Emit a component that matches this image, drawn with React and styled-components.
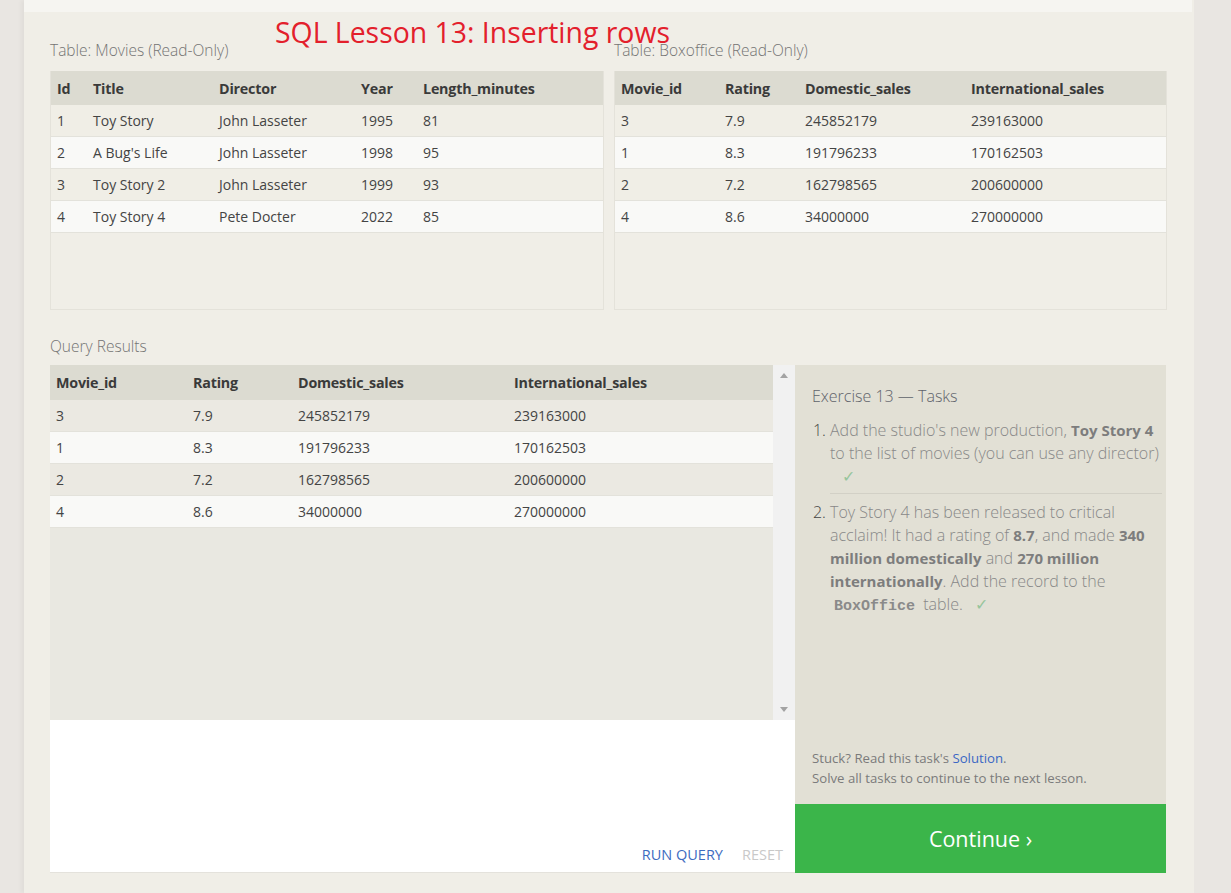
import React from 'react';
import styled, { createGlobalStyle } from 'styled-components';

const GlobalStyle = createGlobalStyle`
  html, body {
    margin: 0;
    padding: 0;
    background: #e9e6e2;
    font-family: "Open Sans", "Noto Sans", sans-serif;
  }
`;

const Page = styled.div`
  position: relative;
  margin-left: 24px;
  width: 1170px;
  min-height: 893px;
  background: #f0eee7;
  box-shadow: -3px 0 4px rgba(0, 0, 0, 0.04);
`;

const TopStrip = styled.div`
  height: 12px;
  margin-right: 2px;
  background: #f6f5f1;
`;

const Content = styled.div`
  padding: 26px 27px 20px 26px;
`;

const Overlay = styled.div`
  position: absolute;
  left: 251px;
  top: 13px;
  font-family: "Open Sans", "Noto Sans", sans-serif;
  font-size: 28.4px;
  color: #e3202c;
  white-space: nowrap;
`;

const TablesRow = styled.div`
  display: grid;
  grid-template-columns: 554px 553px;
  gap: 10px;
`;

const Label = styled.div`
  font-size: 15.5px;
  font-weight: 300;
  color: #747474;
  height: 33px;
  line-height: 24px;
`;

const TableBox = styled.div`
  height: 239px;
  border: 1px solid #e4e2da;
  border-top: none;
  box-sizing: border-box;
  background: ${(p) => p.bg || '#f0eee7'};
`;

const Table = styled.table`
  width: 100%;
  border-collapse: collapse;
  table-layout: fixed;
  font-size: 14px;
`;

const Th = styled.th`
  width: ${(p) => (p.w ? `${p.w}px` : 'auto')};
  height: ${(p) => p.h || 34}px;
  padding: 0 0 0 6px;
  text-align: left;
  font-weight: 700;
  font-size: 14.3px;
  letter-spacing: -0.2px;
  color: #3a3a3a;
  background: #dcdbd1;
  box-sizing: border-box;
`;

const Tr = styled.tr`
  background: ${(p) => (p.even ? '#f9f9f7' : p.odd)};
  border-bottom: 1px solid #e3e2db;
`;

const Td = styled.td`
  height: 31px;
  padding: 0 0 0 6px;
  color: #444;
  font-weight: 400;
`;

const ResultsLabel = styled(Label)`
  margin-top: 26px;
  height: 29px;
  line-height: 20px;
`;

const Workspace = styled.div`
  display: grid;
  grid-template-columns: 745px 371px;
`;

const LeftCol = styled.div`
  display: flex;
  flex-direction: column;
`;

const ResultsArea = styled.div`
  display: flex;
  height: 355px;
  background: #e9e8e1;
`;

const ResultsTableWrap = styled.div`
  flex: 1;
`;

const Scrollbar = styled.div`
  width: 22px;
  background: #f1f1f1;
  display: flex;
  flex-direction: column;
  justify-content: space-between;
  align-items: center;
  padding: 8px 0 8px;
  box-sizing: border-box;
`;

const Arrow = styled.div`
  width: 0;
  height: 0;
  border-left: 4px solid transparent;
  border-right: 4px solid transparent;
  ${(p) => (p.down ? 'border-top: 5px solid #a3a3a3;' : 'border-bottom: 5px solid #a3a3a3;')}
`;

const Editor = styled.div`
  height: 153px;
  background: #fff;
  border-bottom: 1px solid #e4e2dc;
  box-sizing: border-box;
  display: flex;
  align-items: flex-end;
  justify-content: flex-end;
  gap: 19px;
  padding: 0 12px 8px 0;
`;

const EditorButton = styled.span`
  font-size: 14.5px;
  color: ${(p) => (p.muted ? '#c9c9c9' : '#3d6bbf')};
`;

const RightCol = styled.div`
  display: flex;
  flex-direction: column;
`;

const TaskPanel = styled.div`
  height: 439px;
  background: #e2e0d5;
  padding: 20px 4px 0 17px;
  box-sizing: border-box;
  display: flex;
  flex-direction: column;
`;

const TaskTitle = styled.div`
  font-size: 16px;
  font-weight: 300;
  color: #5f636b;
  margin-bottom: 12px;
`;

const TaskList = styled.ol`
  margin: 0;
  padding: 0 0 0 18px;
  font-size: 16px;
  line-height: 23px;
  font-weight: 300;
  color: #888;

  li::marker {
    color: #444;
  }
`;

const Task = styled.li`
  padding: 0 0 ${(p) => (p.last ? 0 : 5)}px 0;
  margin-bottom: ${(p) => (p.last ? 0 : 7)}px;
  border-bottom: ${(p) => (p.last ? 'none' : '1px solid #d2d0c6')};
`;

const B = styled.b`
  font-weight: 700;
  font-size: 15px;
  color: #7d7d7d;
`;

const Code = styled.code`
  font-family: "Liberation Mono", "DejaVu Sans Mono", monospace;
  font-weight: 700;
  font-size: 15px;
  color: #8a8a8a;
  padding: 0 4px;
`;

const Check = styled.span`
  color: #97c59c;
  margin-left: ${(p) => p.ml || 8}px;
`;

const Stuck = styled.div`
  margin-top: auto;
  padding-bottom: 16px;
  font-size: 13.2px;
  line-height: 20px;
  color: #7b7b7b;
`;

const Link = styled.a`
  color: #3a67c4;
  text-decoration: none;
`;

const Continue = styled.button`
  height: 69px;
  border: none;
  background: #3bb54a;
  color: #fff;
  font-family: "Open Sans", "Noto Sans", sans-serif;
  font-size: 21.5px;
  padding: 0;
  cursor: pointer;
`;

const movies = [
  ['1', 'Toy Story', 'John Lasseter', '1995', '81'],
  ['2', "A Bug's Life", 'John Lasseter', '1998', '95'],
  ['3', 'Toy Story 2', 'John Lasseter', '1999', '93'],
  ['4', 'Toy Story 4', 'Pete Docter', '2022', '85'],
];

const boxoffice = [
  ['3', '7.9', '245852179', '239163000'],
  ['1', '8.3', '191796233', '170162503'],
  ['2', '7.2', '162798565', '200600000'],
  ['4', '8.6', '34000000', '270000000'],
];

const DataTable = ({ cols, widths, rows, odd, headH }) => (
  <Table>
    <thead>
      <tr>
        {cols.map((c, i) => (
          <Th key={c} w={widths[i]} h={headH}>
            {c}
          </Th>
        ))}
      </tr>
    </thead>
    <tbody>
      {rows.map((r, i) => (
        <Tr key={i} even={i % 2 === 1} odd={odd}>
          {r.map((v, j) => (
            <Td key={j}>{v}</Td>
          ))}
        </Tr>
      ))}
    </tbody>
  </Table>
);

const App = () => {
  return (
    <>
      <GlobalStyle />
      <Page>
        <TopStrip />
        <Overlay>SQL Lesson 13: Inserting rows</Overlay>
        <Content>
          <TablesRow>
            <div>
              <Label>Table: Movies (Read-Only)</Label>
              <TableBox>
                <DataTable
                  cols={['Id', 'Title', 'Director', 'Year', 'Length_minutes']}
                  widths={[36, 126, 142, 62]}
                  rows={movies}
                  odd="#f0eee6"
                />
              </TableBox>
            </div>
            <div>
              <Label>Table: Boxoffice (Read-Only)</Label>
              <TableBox>
                <DataTable
                  cols={['Movie_id', 'Rating', 'Domestic_sales', 'International_sales']}
                  widths={[104, 80, 166]}
                  rows={boxoffice}
                  odd="#f0eee6"
                />
              </TableBox>
            </div>
          </TablesRow>

          <ResultsLabel>Query Results</ResultsLabel>
          <Workspace>
            <LeftCol>
              <ResultsArea>
                <ResultsTableWrap>
                  <DataTable
                    cols={['Movie_id', 'Rating', 'Domestic_sales', 'International_sales']}
                    widths={[137, 105, 216]}
                    rows={boxoffice}
                    odd="#ebe9e2"
                    headH={35}
                  />
                </ResultsTableWrap>
                <Scrollbar>
                  <Arrow />
                  <Arrow down />
                </Scrollbar>
              </ResultsArea>
              <Editor>
                <EditorButton>RUN QUERY</EditorButton>
                <EditorButton muted>RESET</EditorButton>
              </Editor>
            </LeftCol>
            <RightCol>
              <TaskPanel>
                <TaskTitle>Exercise 13 — Tasks</TaskTitle>
                <TaskList>
                  <Task>
                    Add the studio's new production, <B>Toy Story 4</B> to the list of movies
                    (you can use any director)
                    <br />
                    <Check ml={12}>✓</Check>
                  </Task>
                  <Task last>
                    Toy Story 4 has been released to critical acclaim! It had a rating of{' '}
                    <B>8.7</B>, and made <B>340 million domestically</B> and{' '}
                    <B>270 million internationally</B>. Add the record to the{' '}
                    <Code>BoxOffice</Code> table. <Check>✓</Check>
                  </Task>
                </TaskList>
                <Stuck>
                  Stuck? Read this task's <Link href="#">Solution</Link>.
                  <br />
                  Solve all tasks to continue to the next lesson.
                </Stuck>
              </TaskPanel>
              <Continue>Continue ›</Continue>
            </RightCol>
          </Workspace>
        </Content>
      </Page>
    </>
  );
};

export default App;
